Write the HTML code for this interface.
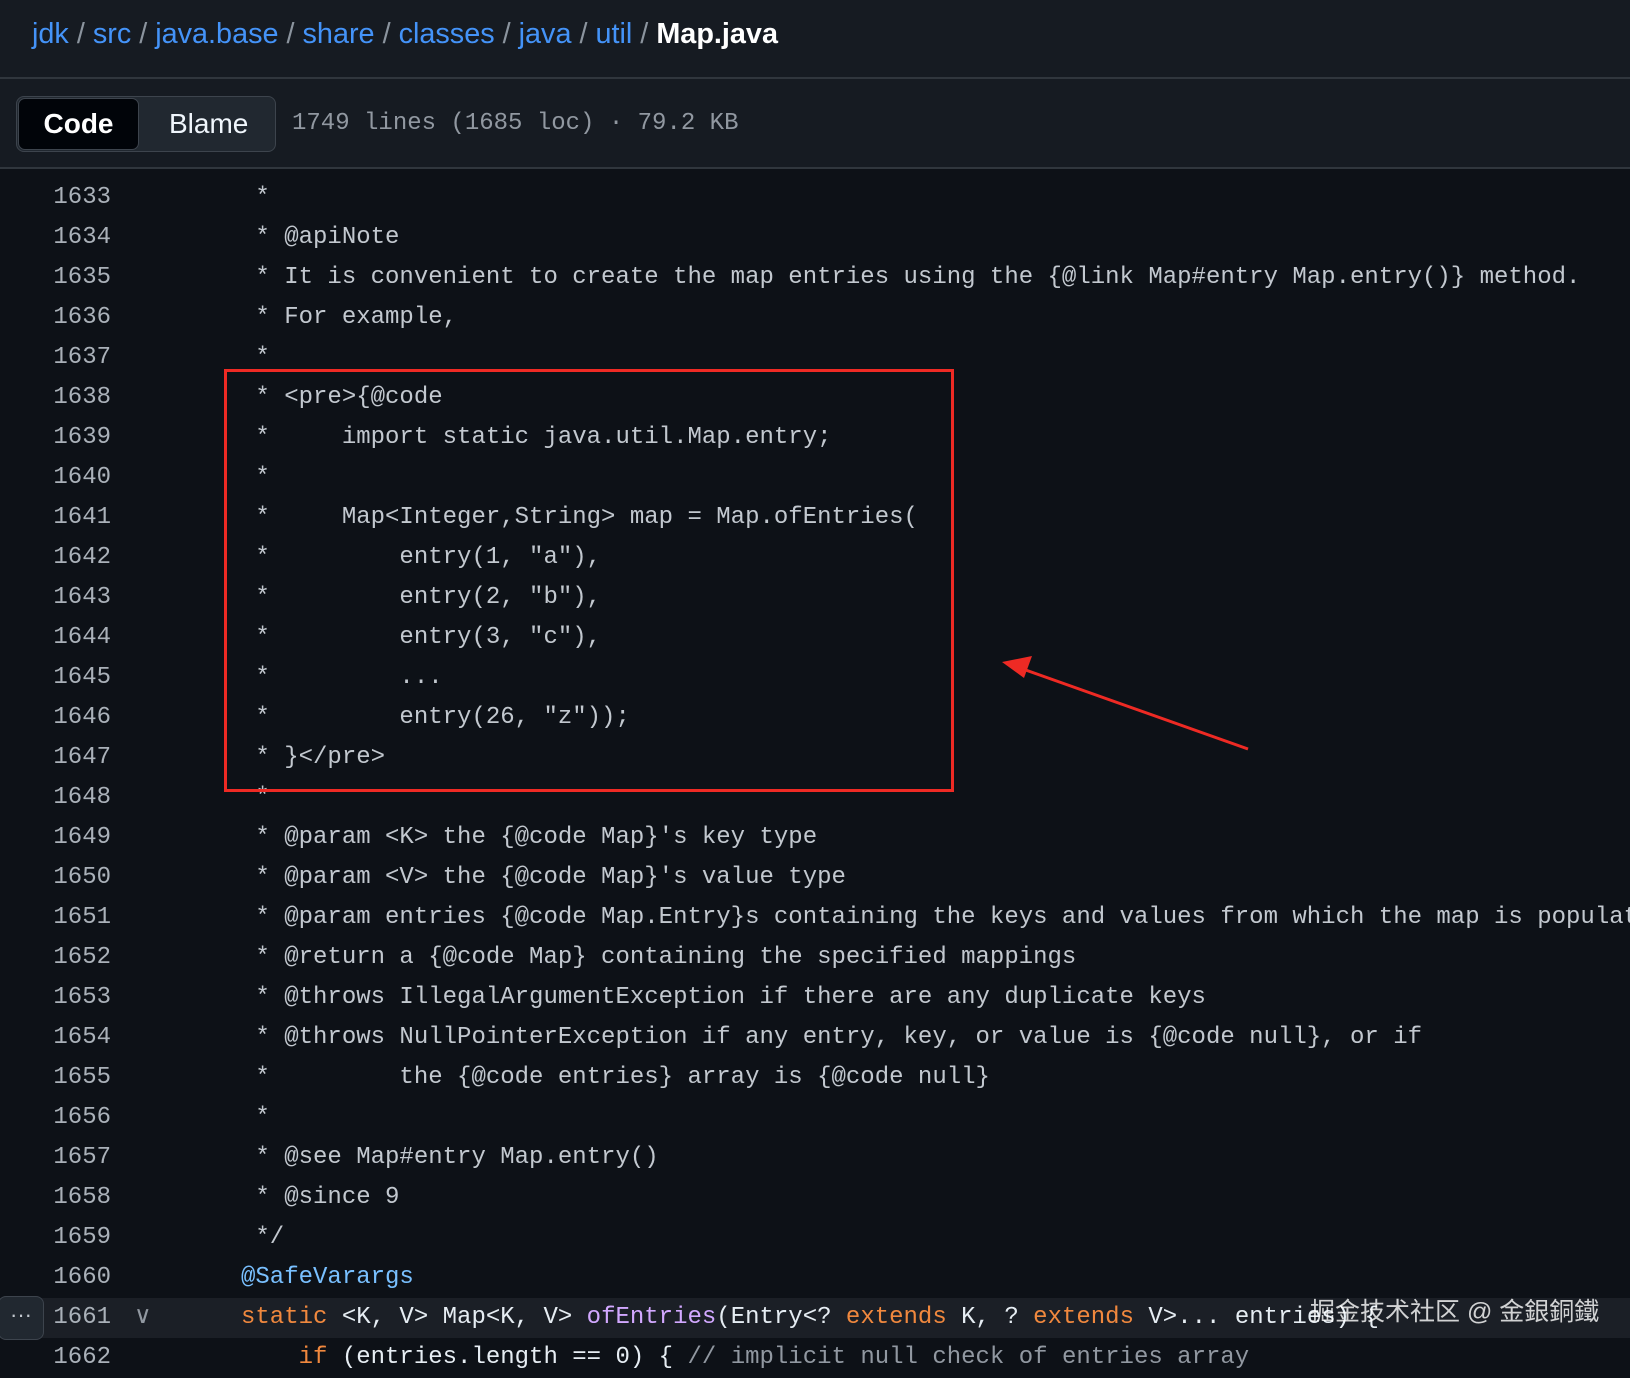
<!DOCTYPE html>
<html><head><meta charset="utf-8"><style>
body{margin:0;width:1630px;height:1354px;background:#0d1117;overflow:hidden;position:relative;font-family:"Liberation Sans",sans-serif}
.hdr{position:absolute;left:0;top:0;width:1630px;height:168px;background:#161b22}
.bc{position:absolute;left:32px;top:18px;font-size:28.8px;color:#8b949e;white-space:pre}
.bc a{color:#4493f8;text-decoration:none}
.bc b{color:#fff}
.l1{position:absolute;left:0;top:77px;width:1630px;height:2px;background:#30363d}
.l2{position:absolute;left:0;top:167px;width:1630px;height:2px;background:#30363d}
.seg{position:absolute;left:16px;top:96px;width:260px;height:56px;border:1px solid #3d444d;border-radius:8px;background:#212830;box-sizing:border-box}
.seg .c{position:absolute;left:1px;top:1px;width:121px;height:52px;background:#010409;border:1px solid #3d444d;border-radius:7px;box-sizing:border-box;color:#fff;font-size:28px;text-align:center;line-height:50px;font-weight:bold}
.seg .b{position:absolute;left:152px;top:0;color:#f0f6fc;font-size:28px;line-height:54px}
.info{position:absolute;left:292px;top:110px;font-family:"Liberation Mono",monospace;font-size:24px;color:#9198a1;white-space:pre}
.code{position:absolute;left:0;top:178px;width:1630px;font-family:"Liberation Mono",monospace;font-size:24px;line-height:40px}
.r{height:40px;position:relative;white-space:pre}
.n{position:absolute;right:1519px;color:#aab1b9}
.t{position:absolute;left:241px;color:#c2c8cf}
.hl{background:#1b1f26}
.k{color:#f0883e}.f{color:#d2a8ff}.a{color:#79c0ff}.w{color:#e6edf3}
</style></head><body>
<div class="hdr"></div>
<div class="bc"><a>jdk</a> / <a>src</a> / <a>java.base</a> / <a>share</a> / <a>classes</a> / <a>java</a> / <a>util</a> / <b>Map.java</b></div>
<div class="l1"></div>
<div class="seg"><div class="c">Code</div><div class="b">Blame</div></div>
<div class="info">1749 lines (1685 loc) · 79.2 KB</div>
<div class="l2"></div>
<div class="code">
<div class="r"><span class="n">1633</span><span class="t"> *</span></div>
<div class="r"><span class="n">1634</span><span class="t"> * @apiNote</span></div>
<div class="r"><span class="n">1635</span><span class="t"> * It is convenient to create the map entries using the {@link Map#entry Map.entry()} method.</span></div>
<div class="r"><span class="n">1636</span><span class="t"> * For example,</span></div>
<div class="r"><span class="n">1637</span><span class="t"> *</span></div>
<div class="r"><span class="n">1638</span><span class="t"> * &lt;pre&gt;{@code</span></div>
<div class="r"><span class="n">1639</span><span class="t"> *     import static java.util.Map.entry;</span></div>
<div class="r"><span class="n">1640</span><span class="t"> *</span></div>
<div class="r"><span class="n">1641</span><span class="t"> *     Map&lt;Integer,String&gt; map = Map.ofEntries(</span></div>
<div class="r"><span class="n">1642</span><span class="t"> *         entry(1, "a"),</span></div>
<div class="r"><span class="n">1643</span><span class="t"> *         entry(2, "b"),</span></div>
<div class="r"><span class="n">1644</span><span class="t"> *         entry(3, "c"),</span></div>
<div class="r"><span class="n">1645</span><span class="t"> *         ...</span></div>
<div class="r"><span class="n">1646</span><span class="t"> *         entry(26, "z"));</span></div>
<div class="r"><span class="n">1647</span><span class="t"> * }&lt;/pre&gt;</span></div>
<div class="r"><span class="n">1648</span><span class="t"> *</span></div>
<div class="r"><span class="n">1649</span><span class="t"> * @param &lt;K&gt; the {@code Map}'s key type</span></div>
<div class="r"><span class="n">1650</span><span class="t"> * @param &lt;V&gt; the {@code Map}'s value type</span></div>
<div class="r"><span class="n">1651</span><span class="t"> * @param entries {@code Map.Entry}s containing the keys and values from which the map is populated</span></div>
<div class="r"><span class="n">1652</span><span class="t"> * @return a {@code Map} containing the specified mappings</span></div>
<div class="r"><span class="n">1653</span><span class="t"> * @throws IllegalArgumentException if there are any duplicate keys</span></div>
<div class="r"><span class="n">1654</span><span class="t"> * @throws NullPointerException if any entry, key, or value is {@code null}, or if</span></div>
<div class="r"><span class="n">1655</span><span class="t"> *         the {@code entries} array is {@code null}</span></div>
<div class="r"><span class="n">1656</span><span class="t"> *</span></div>
<div class="r"><span class="n">1657</span><span class="t"> * @see Map#entry Map.entry()</span></div>
<div class="r"><span class="n">1658</span><span class="t"> * @since 9</span></div>
<div class="r"><span class="n">1659</span><span class="t"> */</span></div>
<div class="r"><span class="n">1660</span><span class="t a">@SafeVarargs</span></div>
<div class="r hl"><span class="n">1661</span><span style="position:absolute;left:134px;color:#9198a1">∨</span><span class="t w"><span class="k">static</span> &lt;K, V&gt; Map&lt;K, V&gt; <span class="f">ofEntries</span>(Entry&lt;? <span class="k">extends</span> K, ? <span class="k">extends</span> V&gt;... entries) {</span></div>
<div class="r"><span class="n">1662</span><span class="t w">    <span class="k">if</span> (entries.length == 0) { <span style="color:#9198a1">// implicit null check of entries array</span></span></div>
</div>
<div style="position:absolute;left:-2px;top:1296px;width:44px;height:42px;border:1px solid #3d444d;border-radius:8px;background:#212830;color:#c2c8cf;font-size:22px;text-align:center;line-height:36px">···</div>
<div style="position:absolute;left:1310px;top:1292px;font-family:'Liberation Sans','Noto Sans CJK SC',sans-serif;font-size:25px;color:rgba(255,255,255,0.8)">掘金技术社区 @ 金銀銅鐵</div>
<div style="position:absolute;left:224px;top:369px;width:730px;height:423px;border:3px solid #ee2a24;box-sizing:border-box"></div>
<svg style="position:absolute;left:0;top:0" width="1630" height="1354"><line x1="1248" y1="749" x2="1020" y2="668" stroke="#ee2a24" stroke-width="3"/><polygon points="1002,662 1032,656 1024,678" fill="#ee2a24"/></svg>
</body></html>
